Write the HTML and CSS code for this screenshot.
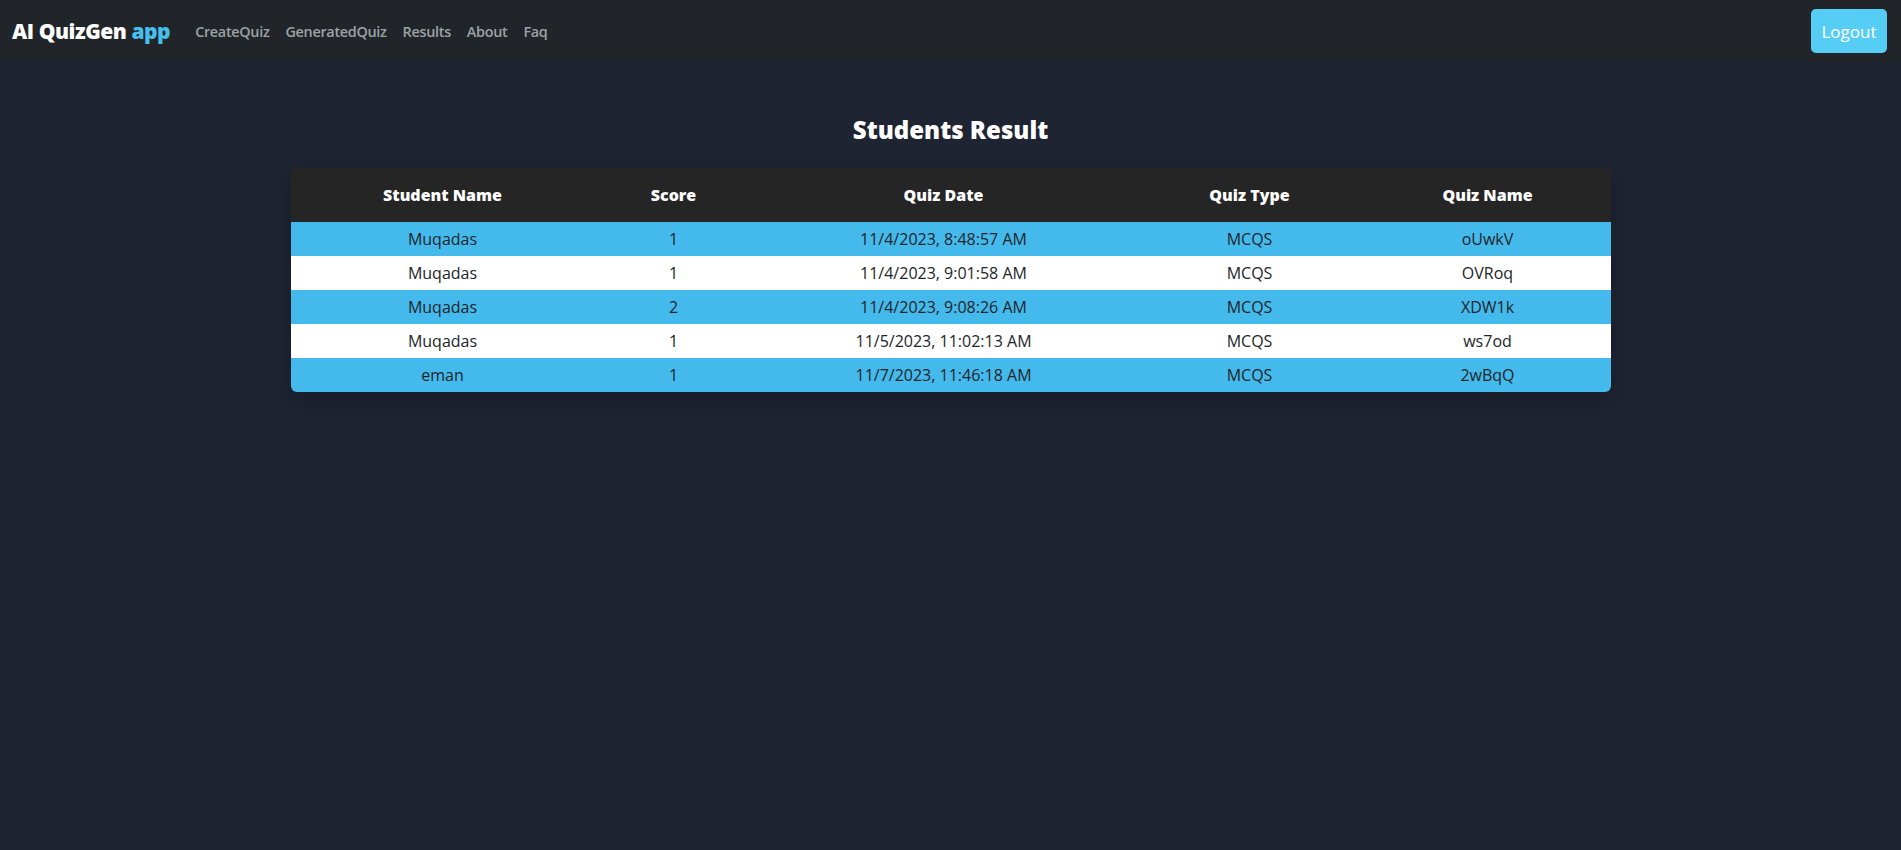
FILE: index.html
```html
<!DOCTYPE html>
<html lang="en">
<head>
<meta charset="utf-8">
<title>AI QuizGen app - Results</title>
<link rel="stylesheet" href="styles.css">
</head>
<body>
<nav class="navbar">
  <div class="nav-left">
    <a class="brand" href="#">AI QuizGen <span class="brand-accent">app</span></a>
    <ul class="nav-links">
      <li><a href="#">CreateQuiz</a></li>
      <li><a href="#">GeneratedQuiz</a></li>
      <li><a href="#">Results</a></li>
      <li><a href="#">About</a></li>
      <li><a href="#">Faq</a></li>
    </ul>
  </div>
  <button class="logout">Logout</button>
</nav>
<main class="content">
  <h1 class="title">Students Result</h1>
  <div class="table-wrap">
    <table class="results">
      <colgroup>
        <col class="c1"><col class="c2"><col class="c3"><col class="c4"><col class="c5">
      </colgroup>
      <thead>
        <tr><th>Student Name</th><th>Score</th><th>Quiz Date</th><th>Quiz Type</th><th>Quiz Name</th></tr>
      </thead>
      <tbody>
        <tr><td>Muqadas</td><td>1</td><td>11/4/2023, 8:48:57 AM</td><td>MCQS</td><td>oUwkV</td></tr>
        <tr><td>Muqadas</td><td>1</td><td>11/4/2023, 9:01:58 AM</td><td>MCQS</td><td>OVRoq</td></tr>
        <tr><td>Muqadas</td><td>2</td><td>11/4/2023, 9:08:26 AM</td><td>MCQS</td><td>XDW1k</td></tr>
        <tr><td>Muqadas</td><td>1</td><td>11/5/2023, 11:02:13 AM</td><td>MCQS</td><td>ws7od</td></tr>
        <tr><td>eman</td><td>1</td><td>11/7/2023, 11:46:18 AM</td><td>MCQS</td><td>2wBqQ</td></tr>
      </tbody>
    </table>
  </div>
</main>
</body>
</html>
```
FILE: styles.css
```css
* { box-sizing: border-box; }
html, body { height: 100%; }
body {
  margin: 0;
  background: #1f2433;
  font-family: "Open Sans", "Noto Sans", sans-serif;
  color: #fff;
}
.navbar {
  height: 62px;
  background: #212529;
  display: flex;
  align-items: center;
  justify-content: space-between;
  padding: 0 14px 0 12px;
}
.nav-left { display: flex; align-items: center; }
.brand {
  color: #fff;
  text-decoration: none;
  font-weight: 800;
  font-size: 21px;
  letter-spacing: -0.45px;
  margin-right: 17px;
}
.brand-accent { color: #45c0ee; }
.nav-links {
  list-style: none;
  display: flex;
  margin: 0;
  padding: 0;
}
.nav-links a {
  display: block;
  padding: 8px 8px;
  color: #9ea2a6;
  text-decoration: none;
  font-size: 14.4px;
  font-weight: 600;
  letter-spacing: -0.3px;
}
.logout {
  width: 76px;
  height: 44px;
  border: none;
  border-radius: 5px;
  background: #56cdf4;
  color: #fff;
  font-family: inherit;
  font-size: 17px;
  font-weight: 500;
  padding: 0;
}
.content {
  display: flex;
  flex-direction: column;
  align-items: center;
}
.title {
  margin: 50px 0 0;
  height: 56px;
  font-size: 24px;
  font-weight: 800;
  line-height: 36px;
}
.table-wrap {
  width: 1320px;
  border-radius: 6px;
  overflow: hidden;
  box-shadow: 0 8px 24px rgba(0, 0, 0, 0.25);
}
.results {
  width: 100%;
  border-collapse: collapse;
  table-layout: fixed;
}
.c1 { width: 304px; }
.c2 { width: 158px; }
.c3 { width: 382px; }
.c4 { width: 230px; }
.c5 { width: 246px; }
.results th {
  background: #252525;
  color: #fff;
  height: 54px;
  font-weight: 800;
  font-size: 16px;
  text-align: center;
  padding: 0;
}
.results td {
  height: 34px;
  padding: 0;
  text-align: center;
  color: #212529;
  font-size: 16px;
}
.results tbody tr:nth-child(odd) td { background: #44b9ec; }
.results tbody tr:nth-child(even) td { background: #ffffff; }
```
